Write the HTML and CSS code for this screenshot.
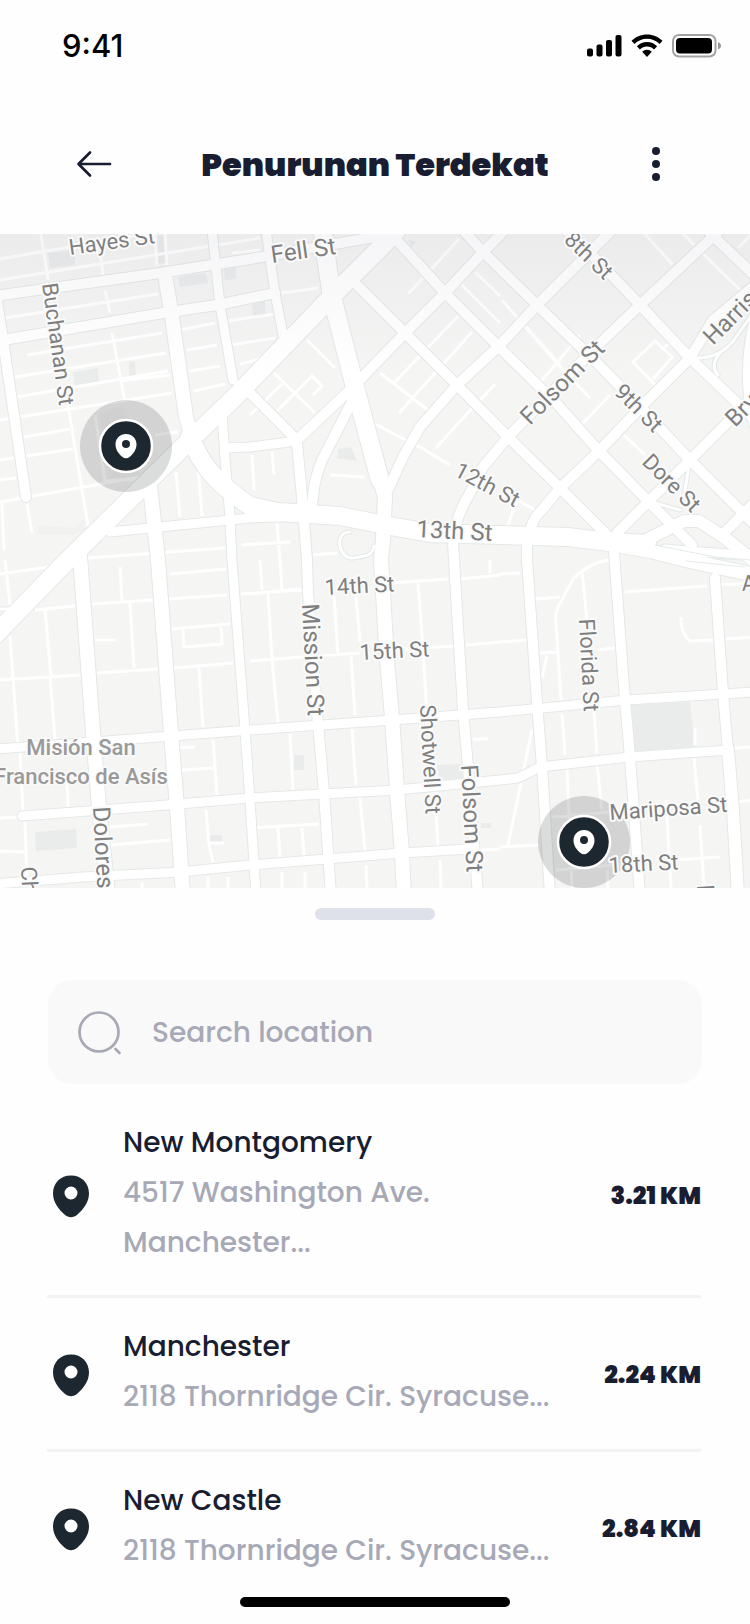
FILE: index.html
```html
<!DOCTYPE html>
<html lang="id">
<head>
<meta charset="utf-8">
<meta name="viewport" content="width=device-width, initial-scale=1">
<title>Penurunan Terdekat</title>
<link rel="stylesheet" href="styles.css">
</head>
<body>
<div class="screen">
  <header>
    <div class="status">
      <time class="clock">9:41</time>
      <svg class="status-icons" width="136" height="26" viewBox="586 33 136 26" aria-hidden="true">
        <g fill="#000">
          <rect x="587" y="48.500" width="6" height="8" rx="2"/><rect x="596.500" y="44.500" width="6" height="12" rx="2"/><rect x="606" y="40" width="6" height="16.500" rx="2"/><rect x="615.500" y="35" width="6" height="21.500" rx="2"/>
          <path d="M647 34.500c6 0 11.500 2.400 15.500 6.300l-2.900 3.200c-3.300-3.200-7.700-5.200-12.600-5.200s-9.300 2-12.600 5.200l-2.900-3.200c4-3.900 9.500-6.300 15.500-6.300zM647 42c3.900 0 7.500 1.600 10.100 4.200l-3 3.200c-1.800-1.800-4.400-3-7.100-3s-5.300 1.200-7.100 3l-3-3.200c2.600-2.600 6.200-4.200 10.100-4.200zM647 49.700c1.900 0 3.600.8 4.800 2L647 57l-4.800-5.300c1.200-1.200 2.900-2 4.800-2z"/>
          <rect x="676" y="38" width="36" height="15.500" rx="4"/>
          <path d="M718 42v7.500c1.800-.8 3-2 3-3.700s-1.200-3-3-3.800z" opacity=".4"/>
        </g>
        <rect x="673" y="35" width="42.500" height="21.500" rx="6" fill="none" stroke="#a3a3a3" stroke-width="2"/>
      </svg>
    </div>
    <nav class="bar">
      <button class="icon-btn" aria-label="Kembali"><svg width="36" height="28" viewBox="0 0 36 28"><path d="M34 14H2.500M14 2.500 2.500 14 14 25.500" fill="none" stroke="#191d31" stroke-width="2.700" stroke-linecap="round" stroke-linejoin="round"/></svg></button>
      <h1 class="title">Penurunan Terdekat</h1>
      <button class="icon-btn" aria-label="Menu"><svg width="10" height="36" viewBox="0 0 10 36" fill="#191d31"><circle cx="5" cy="5" r="4"/><circle cx="5" cy="18" r="4"/><circle cx="5" cy="31" r="4"/></svg></button>
    </nav>
  </header>

  <svg class="map" viewBox="0 234 750 654" role="img" aria-label="Peta lokasi">
    <defs>
      <linearGradient id="fade" x1="0" y1="0" x2="0" y2="1"><stop offset="0" stop-color="#3c3c60" stop-opacity=".05"/><stop offset="1" stop-color="#3c3c60" stop-opacity="0"/></linearGradient>
      <g id="roads">
        <path class="w18" d="M-10 640 66 562 188 442 237 395 288 342 338 290 385 243 397 230"/>
        <path class="w18" d="M190 436Q198 458 212 474T250 506L278 512 340 516 390 526 430 533 500 535 567 537 610 542 647 544"/>
        <path class="w12" d="M640 543 684 521 699 521 725 538 755 562"/>
        <path class="w14" d="M600 542 650 551 690 561 755 575"/>
        <path class="w8" d="M665 549 700 552 755 556"/>
        <path class="w18" d="M322 225 325 250 332 297 355 387 380 480"/>
        <path class="w14" d="M380 480 385 497 383 540 381 560 387 660 392 717 397 790 402 853 404 895"/>
        <path class="w14" d="M165 275 172 317 186 417 193 440M80 556 93 733 99 807 108 895M150 486 158 560 171 733 177 807 183 895"/>
        <path class="w10" d="M-4 295 3 340 26 497"/>
        <path class="w8" d="M222 412 225 458 230 517 232 560 245 730 250 800 256 895"/>
        <path class="w10" d="M297 443 302 497 307 560 308 593 318 723 324 793 331 895"/>
        <path class="w10" d="M755 285 713 320 690 358 643 405 600 450 560 488 542 510Q530 520 527 547V560L537 703 542 767 550 895"/>
        <path class="w10" d="M720 230 640 305 597 346 508 437 483 467 470 493Q455 517 453 543L454 560 463 710 468 767 478 895"/>
        <path class="w10" d="M755 395 690 460 650 500 617 533 614 553 625 700 630 757 640 895M715 578 723 693 728 750"/>
        <path class="w12" d="M728 750 733 810 738 895"/>
        <path class="w10" d="M390 233 445 293 497 345 558 405 598 450 647 500 692 545M463 230 483 252 537 305 597 363 643 410 690 460 743 513 755 525M350 278 405 333 457 385 508 437 560 488 612 540M566 230 600 263 640 305 690 358 755 420M709 232 755 276M245 388 297 440"/>
        <path class="w10" d="M297 440 350 390 405 333 445 293 483 252 505 230M353 400 322 460Q314 480 313 497L311 510M612 230 537 305 500 345 457 385 420 427 403 457 387 492M725 532 755 502"/>
        <path class="w10" d="M-5 296 160 273 250 259 380 236M3 340 163 313 217 305 275 293"/>
        <path class="w8" d="M212 230 220 305 233 380M266 230 275 293 283 335M110 532 250 518 280 517M225 448 250 447 297 441"/>
        <path class="w8" d="M-5 749 93 742 250 730 393 720 500 712 627 700 755 692M22 816 167 805 250 798 397 790 500 780 518 778 540 767 630 757 728 750M-5 884 83 877 180 872 250 865 402 853 468 849"/>
        <path class="w3" d="M350 532C333 532 339 560 353 558S372 556 374 546M697 358Q720 358 734 340L755 310M718 375Q709 365 721 352M690 460 685 490M655 503 680 510M-5 609H10L22 600"/>
        <path class="w10" d="M760 300Q738 370 756 430"/>
      </g>
    </defs>
    <rect class="ground" y="234" width="750" height="654"/>
    <g class="park">
      <path d="M48 253 75 250V265L50 268ZM158 236 164 235 165 263 156 264ZM178 277 206 273 208 283 180 287ZM223 267 236 266V279L225 280ZM73 372 98 368 99 384 75 388ZM129 362 135 361 136 375 129 376ZM252 303 265 301V315L253 316ZM338 449 351 447 357 461 337 458ZM408 239 416 242 411 248Z"/>
      <path opacity=".4" d="M100 415 123 405 140 478 110 484ZM37 525 75 528 85 518V530L72 535H40Z"/>
      <path d="M631 705 690 702 695 748 634 751ZM35 832 76 829 77 848 36 851ZM294 755H304V770H294ZM437 765 462 764V778L440 780ZM210 835H222V842H210ZM481 823H491V828H481Z"/>
    </g>
    <g class="lane">
      <path d="M0 259 150 233M0 280 260 238M41 234 48 280M100 250 103 275M155 234 157 265M165 234 167 265M105 291 110 313M5 318 158 294M27 355 162 333M15 377 166 353M17 397 168 371M112 333 125 402M120 381 170 375M0 420 172 393M180 330 215 323M187 350 217 345M190 371 220 366M194 391 225 384M225 301 250 296M228 321 275 314M230 345 275 338M240 364 265 358M232 253 260 250M24 437 70 429M0 460 73 449M0 480 16 478M68 405 88 526M0 502 78 488 150 475M95 415 105 481 136 479M155 435 178 432M27 504 32 533M2 502 4 550M176 472 180 517M198 465 202 516M88 558 225 548M242 545 290 542M252 455 254 490M272 452 274 475M277 523 280 560M282 293 318 288M307 340 335 368M274 373 315 413M250 415 282 384M277 411 312 376 322 386 313 395M380 373 428 410M395 382 458 316M399 413 472 332M373 423 425 450 450 465M330 475 365 477M436 448 452 430 495 384M408 294 435 265 459 239M462 285 500 323M475 272 500 296M502 300 563 370 590 398M582 424 610 395M520 320 560 365M540 383 580 335M645 234 672 264M683 234 740 290M738 248 752 234M655 385 633 362 655 341 672 357 653 379M662 350 668 344M624 435 645 455M508 525 517 500 535 510M313 555 337 553"/>
      <path d="M0 574 48 567M35 610 75 606M92 604 153 600M167 599 227 595M241 594 302 590M120 567 122 601M130 603 134 668M45 610 51 676M95 640H116M0 680 80 675M97 673 158 669M174 668 233 663M50 676 55 740M5 560 10 605M10 636 18 748M170 574 226 569M172 629 230 624M183 629 184 647 222 644 221 627M199 668 203 727M178 748 195 747M213 740 217 795M182 770 213 768M20 750 23 814M0 818 20 817M25 822 27 880M0 851 25 852M67 780 68 807M110 827 148 824M110 845 170 840M206 810 209 845 213 862M210 843H224M250 661 302 657 360 653M268 594 272 660 278 722M260 560 262 590M280 560 282 590M250 594 300 589M334 596 338 655M356 596 360 642M351 656 355 715M290 734 293 790M352 729 356 785M250 828 318 824M278 828 280 857M302 828 304 857M360 797 365 852M282 872V888M305 872V888M366 865 367 888M142 882V888M208 877V888M228 877V888M391 583 448 579M418 582 423 650 427 715M391 650 454 646M435 792 438 847M440 860 441 888M473 739H488M460 579 500 575M466 645 526 640M490 560V573M500 574 520 573M535 599 560 597M540 653 557 652M597 650 615 648M609 560Q590 562 573 579L563 598Q554 612 556 622L561 700M582 570 587 620M547 655 542 678M532 730 508 845M562 714 565 755M594 712 597 753M567 768 572 888M597 765 602 810M625 592 707 586M720 585 752 583M681 617Q680 632 690 641L713 640M726 639 752 637M695 728V745M694 758 698 800M666 800 671 888M700 825 704 888M550 817 610 812M500 847 538 845M556 870 625 864M675 860 720 857M735 748 752 747M737 802 752 800M480 850 500 849M607 870 608 888"/>
    </g>
    <use class="casing" href="#roads"/>
    <use class="surface" href="#roads"/>
    <g class="ramp"><path d="M655 545 690 552 715 557 750 560M686 561 715 564 745 567"/></g>
    <rect y="234" width="750" height="140" fill="url(#fade)"/>
    <g class="halo"><circle cx="126" cy="446" r="46"/><circle cx="584" cy="842" r="46"/></g>
    <g class="street">
      <text class="small" transform="translate(70 255) rotate(-8)">Hayes St</text>
      <text transform="translate(272 263) rotate(-8)">Fell St</text>
      <text class="small" transform="translate(42 284) rotate(82)">Buchanan St</text>
      <text class="small" transform="translate(563 241) rotate(44)">8th St</text>
      <text transform="translate(530 426) rotate(-45)">Folsom St</text>
      <text class="small" transform="translate(613 393) rotate(45)">9th St</text>
      <text class="small" transform="translate(641 463) rotate(45)">Dore St</text>
      <text transform="translate(713 346) rotate(-45)">Harrison St</text>
      <text transform="translate(735 428) rotate(-45)">Bryant St</text>
      <text class="small" transform="translate(453 475) rotate(28)">12th St</text>
      <text transform="translate(416 537) rotate(3)">13th St</text>
      <text class="small" transform="translate(325 595) rotate(-3)">14th St</text>
      <text class="small" transform="translate(360 660) rotate(-3)">15th St</text>
      <text transform="translate(302 604) rotate(87)">Mission St</text>
      <text class="small" transform="translate(579 619) rotate(87)">Florida St</text>
      <text class="small" transform="translate(420 705) rotate(87)">Shotwell St</text>
      <text transform="translate(461 765) rotate(87)">Folsom St</text>
      <text transform="translate(93 807) rotate(87)">Dolores St</text>
      <text class="small" transform="translate(21 867) rotate(87)">Church St</text>
      <text class="small" transform="translate(610 820) rotate(-4)">Mariposa St</text>
      <text class="small" transform="translate(609 873) rotate(-3)">18th St</text>
      <text class="small" transform="translate(742 591) rotate(-3)">Alameda St</text>
      <text transform="translate(697 885) rotate(87)">F</text>
    </g>
    <g class="district"><text x="81" y="755">Misión San</text><text x="81" y="784">Francisco de Asís</text></g>
    <g id="pin">
      <circle cx="126" cy="446" r="26" fill="#1d272f" stroke="#fff" stroke-width="2.500"/>
      <path fill="#fff" fill-rule="evenodd" d="M126 434c6 0 10.500 4.300 10.500 10.500 0 5.500-3.500 9.500-6.700 12.200-2.500 2-5.100 2-7.600 0-3.200-2.700-6.700-6.700-6.700-12.200 0-6.200 4.500-10.500 10.500-10.500zm0 6a4 4 0 1 0 0 8 4 4 0 0 0 0-8z"/>
    </g>
    <use href="#pin" x="458" y="396"/>
  </svg>

  <main class="sheet">
    <div class="handle"></div>
    <label class="search">
      <svg width="46" height="46" viewBox="0 0 46 46" fill="none" stroke="#a7a9b7" stroke-width="2.700" stroke-linecap="round" aria-hidden="true"><circle cx="23" cy="23" r="19.500"/><path d="m39.500 40 4 4"/></svg>
      <input class="field" type="search" placeholder="Search location" aria-label="Search location">
    </label>
    <ul class="places">
      <li class="place">
        <svg class="marker" width="38" height="44" viewBox="0 0 38 44"><path fill="#1d272f" fill-rule="evenodd" d="M19 1.500c10.500 0 18 7.500 18 18 0 9-6 16-11.500 21-4 3.500-9 3.500-13 0C7 35.500 1 28.500 1 19.500c0-10.500 7.500-18 18-18zm0 11a6.500 6.500 0 1 0 0 13 6.500 6.500 0 0 0 0-13z"/></svg>
        <div class="info"><h2 class="name">New Montgomery</h2><p class="address">4517 Washington Ave.<br>Manchester...</p></div>
        <span class="distance">3.21 KM</span>
      </li>
      <li class="place">
        <svg class="marker" width="38" height="44" viewBox="0 0 38 44"><path fill="#1d272f" fill-rule="evenodd" d="M19 1.500c10.500 0 18 7.500 18 18 0 9-6 16-11.500 21-4 3.500-9 3.500-13 0C7 35.500 1 28.500 1 19.500c0-10.500 7.500-18 18-18zm0 11a6.500 6.500 0 1 0 0 13 6.500 6.500 0 0 0 0-13z"/></svg>
        <div class="info"><h2 class="name">Manchester</h2><p class="address">2118 Thornridge Cir. Syracuse...</p></div>
        <span class="distance">2.24 KM</span>
      </li>
      <li class="place">
        <svg class="marker" width="38" height="44" viewBox="0 0 38 44"><path fill="#1d272f" fill-rule="evenodd" d="M19 1.500c10.500 0 18 7.500 18 18 0 9-6 16-11.500 21-4 3.500-9 3.500-13 0C7 35.500 1 28.500 1 19.500c0-10.500 7.500-18 18-18zm0 11a6.500 6.500 0 1 0 0 13 6.500 6.500 0 0 0 0-13z"/></svg>
        <div class="info"><h2 class="name">New Castle</h2><p class="address">2118 Thornridge Cir. Syracuse...</p></div>
        <span class="distance">2.84 KM</span>
      </li>
    </ul>
    <div class="home"></div>
  </main>
</div>
</body>
</html>
```
FILE: styles.css
```css
* { box-sizing: border-box; }
body {
  margin: 0;
  background: #fefefe;
  color: #191d31;
  font-family: Poppins, Inter, "Noto Sans", sans-serif;
}
h1, h2, p, ul { margin: 0; padding: 0; }
.screen { display: flex; flex-direction: column; }

.status {
  display: flex;
  justify-content: space-between;
  align-items: center;
  height: 92px;
  padding: 0 28px 0 62px;
}
.clock { color: #000; font: 500 31px/40px Inter, sans-serif; }
.bar {
  display: flex;
  justify-content: space-between;
  align-items: center;
  height: 142px;
  padding: 2px 76px 0;
}
.icon-btn {
  display: flex;
  align-items: center;
  justify-content: flex-start;
  width: 36px;
  height: 44px;
  padding: 0;
  border: 0;
  background: none;
}
.icon-btn:last-child { justify-content: center; }
.title { padding-top: 2px; font-size: 32px; line-height: 48px; font-weight: 900; }

.map { display: block; width: 100%; height: auto; }
.ground { fill: #f5f5f4; }
.park { fill: #eaecec; }
.lane { fill: none; stroke: #fff; stroke-width: 3px; }
.casing, .surface { fill: none; stroke-linecap: round; stroke-linejoin: round; }
.casing { --edge: 2px; stroke: #e3e9e7; }
.surface { --edge: 0px; stroke: #fff; }
.w3 { stroke-width: calc(3px + var(--edge)); }
.w8 { stroke-width: calc(9px + var(--edge)); }
.w10 { stroke-width: calc(10px + var(--edge)); }
.w12 { stroke-width: calc(12px + var(--edge)); }
.w14 { stroke-width: calc(14px + var(--edge)); }
.w18 { stroke-width: calc(18px + var(--edge)); }
.ramp { fill: none; stroke: #e5eae8; stroke-width: 1px; }
.halo { fill: #1d2723; fill-opacity: .16; }
.street text {
  font: 400 24px Roboto, "Noto Sans", sans-serif;
  fill: #7f7f7f;
  stroke: #fafafa;
  stroke-width: 4px;
  stroke-linejoin: round;
  paint-order: stroke;
}
.street .small { font-size: 22px; }
.district text {
  font: 500 22px Roboto, "Noto Sans", sans-serif;
  fill: #999;
  stroke: #fafafa;
  stroke-width: 3px;
  paint-order: stroke;
  text-anchor: middle;
}

.sheet {
  display: flex;
  flex-direction: column;
  padding: 20px 48px 17px;
}
.handle {
  align-self: center;
  width: 120px;
  height: 12px;
  border-radius: 6px;
  background: #dfe1ea;
}
.search {
  display: flex;
  align-items: center;
  gap: 30px;
  height: 104px;
  margin-top: 60px;
  padding: 0 28px;
  border-radius: 24px;
  background: #f9f9f9;
}
.field {
  flex: 1;
  min-width: 0;
  padding: 2px 0 0;
  border: 0;
  outline: 0;
  background: none;
  color: #191d31;
  font: 500 28px/40px Poppins, Inter, sans-serif;
}
.field::placeholder { color: #a7a9b7; opacity: 1; }
.places { margin: 10px 1px 0 -1px; list-style: none; }
.place {
  display: flex;
  align-items: center;
  padding: 30px 0 27px 5px;
  border-bottom: 3px solid #f3f3f3;
}
.place:last-child { padding-bottom: 21px; border-bottom: 0; }
.marker { flex: none; margin-right: 33px; }
.info { flex: 1; min-width: 0; margin-top: -6px; }
.name, .address { font-size: 28px; line-height: 50px; font-weight: 500; }
.address { color: #a7a9b7; }
.distance { font-size: 24px; line-height: 36px; font-weight: 900; white-space: nowrap; }
.home {
  align-self: center;
  width: 270px;
  height: 10px;
  border-radius: 5px;
  background: #000;
}
```
